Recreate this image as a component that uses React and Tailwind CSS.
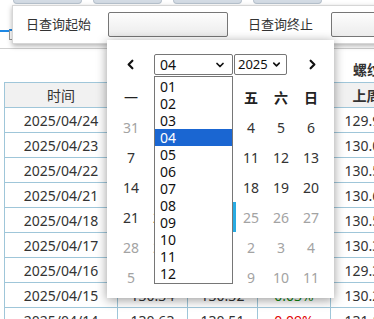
import { ChevronDown, ChevronLeft, ChevronRight } from 'lucide-react';

const rows = [
  { date: '2025/04/24', a: '130.10', b: '129.98', c: '0.09%', up: true, last: '129.98' },
  { date: '2025/04/23', a: '130.25', b: '130.02', c: '0.18%', up: true, last: '130.02' },
  { date: '2025/04/22', a: '130.61', b: '130.54', c: '0.05%', up: true, last: '130.54' },
  { date: '2025/04/21', a: '130.72', b: '130.63', c: '0.07%', up: true, last: '130.63' },
  { date: '2025/04/18', a: '130.58', b: '130.51', c: '0.05%', up: true, last: '130.51' },
  { date: '2025/04/17', a: '130.40', b: '130.35', c: '0.04%', up: true, last: '130.35' },
  { date: '2025/04/16', a: '129.42', b: '129.37', c: '0.04%', up: true, last: '129.37' },
  { date: '2025/04/15', a: '130.34', b: '130.32', c: '0.03%', up: false, last: '130.24' },
  { date: '2025/04/14', a: '130.63', b: '130.51', c: '0.09%', up: true, last: '131.12' },
];

const weeks = [
  [[31, 'o'], [1], [2], [3], [4], [5], [6]],
  [[7], [8], [9], [10], [11], [12], [13]],
  [[14], [15], [16], [17], [18], [19], [20]],
  [[21], [22], [23], [24, 't'], [25, 'o'], [26, 'o'], [27, 'o']],
  [[28, 'o'], [29, 'o'], [30, 'o'], [1, 'o'], [2, 'o'], [3, 'o'], [4, 'o']],
  [[5, 'o'], [6, 'o'], [7, 'o'], [8, 'o'], [9, 'o'], [10, 'o'], [11, 'o']],
];

const months = ['01', '02', '03', '04', '05', '06', '07', '08', '09', '10', '11', '12'];

const cols = 'grid grid-cols-[113px_70px_70px_73px_72px]';
const cell = 'h-[25px] flex items-center justify-center border-r border-b border-[#9fc6d9] whitespace-nowrap';

const App = () => {
  return (
    <div className="relative w-[374px] h-[319px] overflow-hidden bg-white text-[#333] font-['Noto_Sans','Noto_Sans_CJK_SC',sans-serif]">
      {/* Tabs */}
      <div className="flex gap-[11px] pl-[13px] h-[4px]">
        {[0, 1, 2, 3].map((i) => (
          <div key={i} className="w-[69px] h-[4px] bg-[#d3dbe4] border border-t-0 border-[#b8c3ce] rounded-b-[5px]" />
        ))}
      </div>

      {/* Toolbar behind the panel */}
      <div className="h-[45px] border-b border-[#cfcfcf] flex items-start">
        <div className="w-[9px] h-[2px] mt-[26px] bg-[#1e88e5]" />
        <div className="w-[20px] h-[11px] mt-[25px] border border-[#999] border-t-2 border-t-[#1e88e5]" />
      </div>

      {/* Table */}
      <div className="ml-[4px] mt-[8px] text-[14px]">
        <div className={cols + ' h-[25px]'}>
          <div />
          <div />
          <div />
          <div />
          <div className="flex items-center pl-[23px] font-bold whitespace-nowrap">螺纹钢</div>
        </div>
        <div className={cols + ' border-t border-l border-[#9fc6d9] bg-[#f1f1f1]'}>
          <div className={cell}>时间</div>
          <div className={cell + ' font-bold'}>开盘</div>
          <div className={cell + ' font-bold'}>收盘</div>
          <div className={cell + ' font-bold'}>涨幅</div>
          <div className={cell + ' font-bold'}>上周</div>
        </div>
        {rows.map((r) => (
          <div key={r.date} className={cols + ' border-l border-[#9fc6d9]'}>
            <div className={cell}>{r.date}</div>
            <div className={cell}>{r.a}</div>
            <div className={cell}>{r.b}</div>
            <div className={cell + (r.up ? ' text-[#e00000]' : ' text-[#118811]')}>{r.c}</div>
            <div className={cell}>{r.last}</div>
          </div>
        ))}
      </div>

      {/* Search panel */}
      <div className="absolute left-[12px] top-[5px] w-[460px] h-[39px] bg-white border border-[#d6d6d6] shadow-[0_2px_5px_rgba(0,0,0,0.3)] flex items-center pl-[13px] text-[13px] text-[#333]">
        <span className="shrink-0 w-[63px] whitespace-nowrap">日查询起始</span>
        <div className="shrink-0 ml-[19px] w-[120px] h-[25px] border border-[#767676] rounded-[2px] bg-gradient-to-b from-[#fdfdfd] to-[#ececec]" />
        <span className="shrink-0 ml-[20px] w-[64px] whitespace-nowrap">日查询终止</span>
        <div className="shrink-0 ml-[19px] w-[120px] h-[25px] border border-[#767676] rounded-[2px] bg-gradient-to-b from-[#fdfdfd] to-[#ececec]" />
      </div>

      {/* Calendar popup */}
      <div className="absolute left-[107px] top-[40px] w-[227px] h-[258px] bg-white shadow-[0_2px_10px_rgba(0,0,0,0.4)] text-[14px]">
        <div className="flex items-center mt-[14px] h-[21px]">
          <div className="w-[47px] flex justify-center text-[#111]">
            <ChevronLeft size={15} strokeWidth={3.5} />
          </div>
          <div className="w-[79px] h-[21px] border border-[#767676] rounded-[2px] flex items-center justify-between pl-[5px] pr-[6px] text-[#111]">
            <span>04</span>
            <ChevronDown size={12} strokeWidth={3.5} />
          </div>
          <div className="ml-[1px] w-[53px] h-[21px] border border-[#767676] rounded-[2px] flex items-center justify-between pl-[3px] pr-[4px] text-[#111] text-[13px]">
            <span>2025</span>
            <ChevronDown size={11} strokeWidth={3.5} />
          </div>
          <div className="w-[47px] flex justify-center pl-[3px] text-[#111]">
            <ChevronRight size={15} strokeWidth={3.5} />
          </div>
        </div>

        <div className="pl-[9px] mt-[7px]">
          <div className="grid grid-cols-[repeat(7,30px)] h-[30px] items-center text-center font-bold text-[#222]">
            {['一', '二', '三', '四', '五', '六', '日'].map((d) => (
              <div key={d} className={d === '一' ? 'font-normal' : ''}>{d}</div>
            ))}
          </div>
          {weeks.map((w, i) => (
            <div key={i} className="grid grid-cols-[repeat(7,30px)] h-[30px]">
              {w.map(([n, k], j) => (
                <div
                  key={j}
                  className={
                    'flex items-center justify-center ' +
                    (k === 't' ? 'bg-[#29abe2] text-white' : k === 'o' ? 'text-[#a3a3a3]' : 'text-[#333]')
                  }
                >
                  {n}
                </div>
              ))}
            </div>
          ))}
        </div>

        {/* Open month list */}
        <div className="absolute left-[47px] top-[36px] w-[79px] border border-[#767676] bg-white py-[1px] text-[#111]">
          {months.map((m) => (
            <div key={m} className={'h-[17px] leading-[17px] pl-[5px] ' + (m === '04' ? 'bg-[#1a66d2] text-white' : '')}>
              {m}
            </div>
          ))}
        </div>
      </div>
    </div>
  );
};

export default App;
